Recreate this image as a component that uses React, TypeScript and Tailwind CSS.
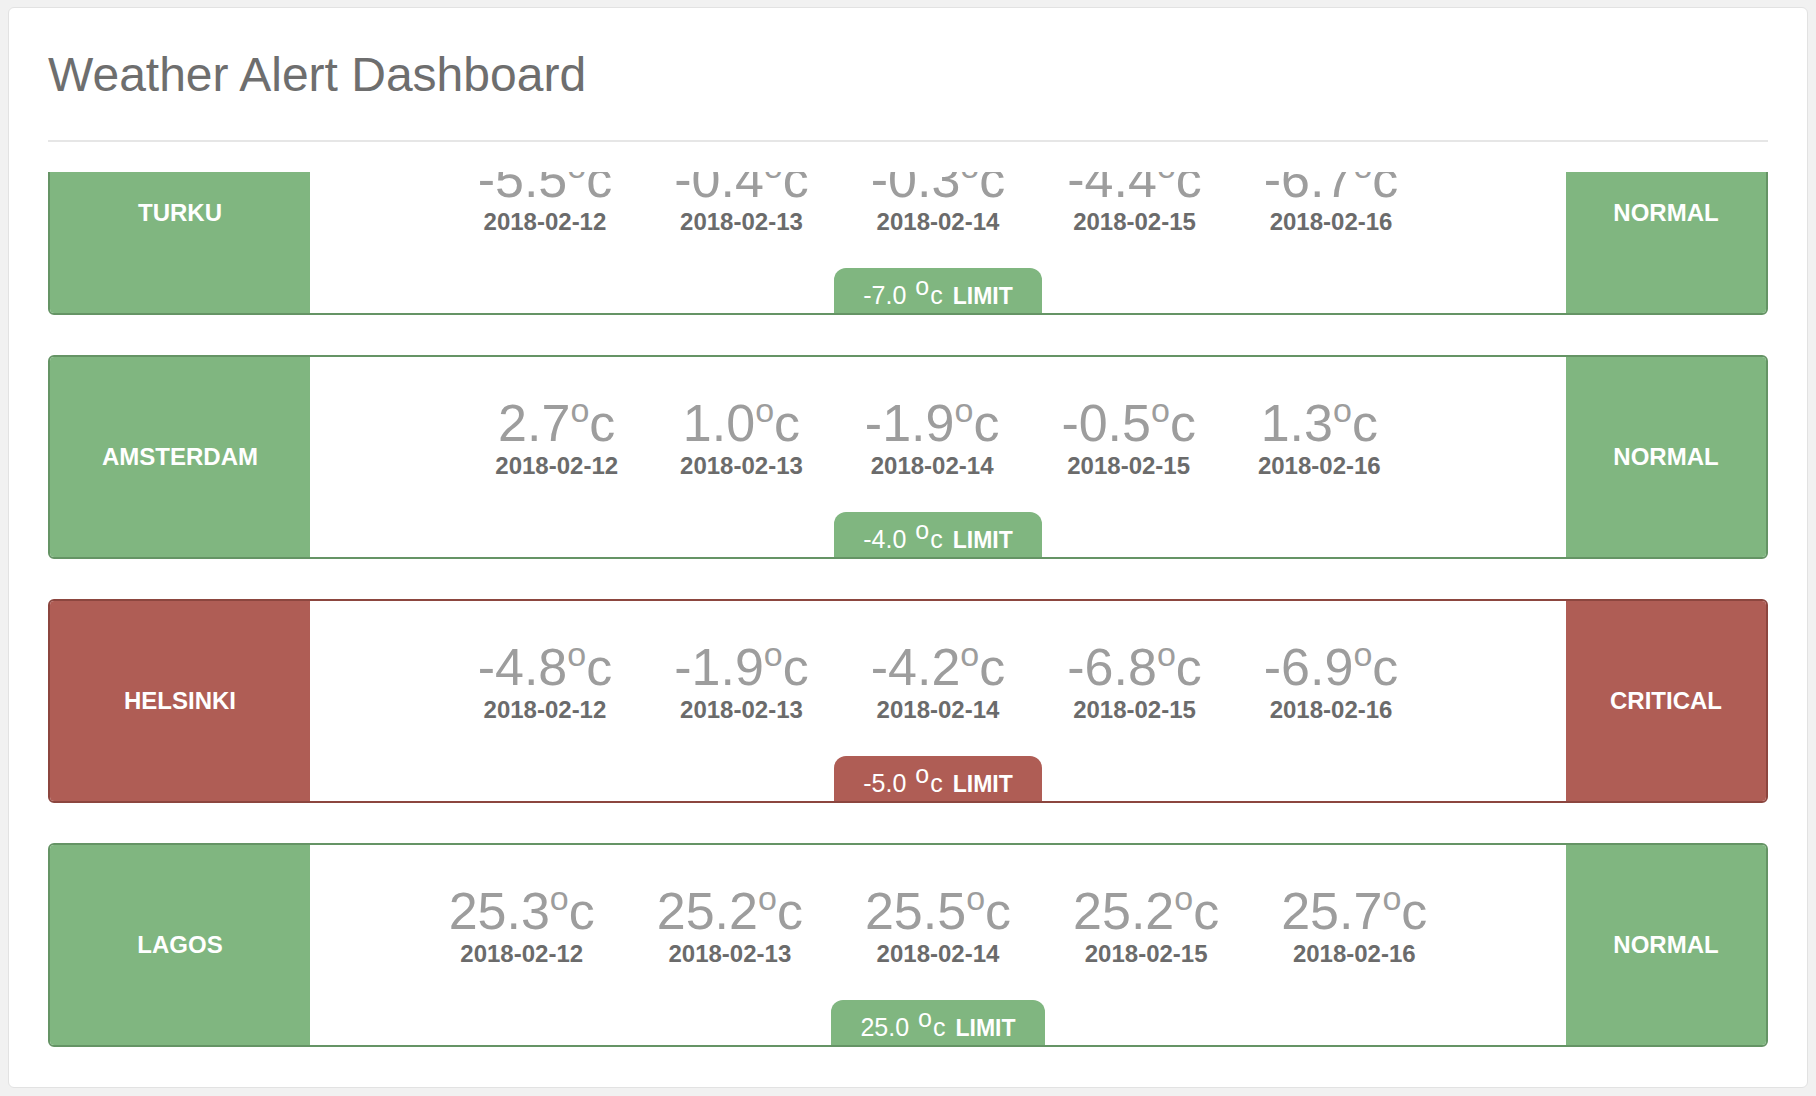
import React from "react";

type Tone = "green" | "red";

const toneClasses: Record<Tone, { fill: string; border: string }> = {
  green: { fill: "bg-[#80b680]", border: "border-[#659465]" },
  red: { fill: "bg-[#af5d55]", border: "border-[#8c463f]" },
};

const dates = ["2018-02-12", "2018-02-13", "2018-02-14", "2018-02-15", "2018-02-16"];

const rows: { city: string; status: string; tone: Tone; temps: string[]; limit: string }[] = [
  { city: "TURKU", status: "NORMAL", tone: "green", temps: ["-5.5", "-0.4", "-0.3", "-4.4", "-6.7"], limit: "-7.0" },
  { city: "AMSTERDAM", status: "NORMAL", tone: "green", temps: ["2.7", "1.0", "-1.9", "-0.5", "1.3"], limit: "-4.0" },
  { city: "HELSINKI", status: "CRITICAL", tone: "red", temps: ["-4.8", "-1.9", "-4.2", "-6.8", "-6.9"], limit: "-5.0" },
  { city: "LAGOS", status: "NORMAL", tone: "green", temps: ["25.3", "25.2", "25.5", "25.2", "25.7"], limit: "25.0" },
];

function Row({ city, status, tone, temps, limit }: (typeof rows)[number]) {
  const t = toneClasses[tone];
  return (
    <div className={`flex h-[204px] shrink-0 overflow-hidden rounded-[6px] border-2 ${t.border}`}>
      <div className={`flex w-[260px] items-center justify-center text-[24px] font-bold leading-none text-white ${t.fill}`}>
        {city}
      </div>
      <div className="flex flex-1 flex-col bg-white">
        <div className="flex flex-1 items-center justify-center gap-[62px] pt-[5px]">
          {temps.map((temp, i) => (
            <div key={i} className="flex flex-col items-center">
              <div className="whitespace-nowrap text-[52px] leading-none text-[#9d9d9d]">
                {temp}
                <span className="relative -top-[19px] text-[34px]">o</span>c
              </div>
              <div className="mt-[5px] whitespace-nowrap text-[24px] font-bold leading-none text-[#6b6b6b]">{dates[i]}</div>
            </div>
          ))}
        </div>
        <div className="flex justify-center">
          <div className={`h-[45px] whitespace-nowrap rounded-t-[12px] px-[29px] pt-[15px] text-[25px] leading-none text-white ${t.fill}`}>
            <span>{limit}</span>
            <span className="relative -top-[9px] ml-[9px]">o</span>
            <span className="ml-[1px]">c</span>
            <span className="ml-[10px] text-[23px] font-bold">LIMIT</span>
          </div>
        </div>
      </div>
      <div className={`flex w-[200px] items-center justify-center text-[24px] font-bold leading-none text-white ${t.fill}`}>
        {status}
      </div>
    </div>
  );
}

export default function App() {
  return (
    <div className="min-h-screen w-full bg-[#f1f1f1] pl-[8px] pt-[7px] font-['Liberation_Sans',Arial,sans-serif]">
      <div className="flex h-[1081px] w-[1800px] flex-col rounded-[6px] border border-[#e2e2e2] bg-white px-[39px] pt-[40px]">
        <h1 className="text-[48px] font-normal leading-[53px] text-[#6e6e6e]">Weather Alert Dashboard</h1>
        <div className="mt-[39px] h-[2px] bg-[#e6e6e6]" />
        <div className="mt-[30px] h-[876px] overflow-hidden">
          <div className="-mt-[61px] flex flex-col gap-[40px]">
            {rows.map((r) => (
              <Row key={r.city} {...r} />
            ))}
          </div>
        </div>
      </div>
    </div>
  );
}
